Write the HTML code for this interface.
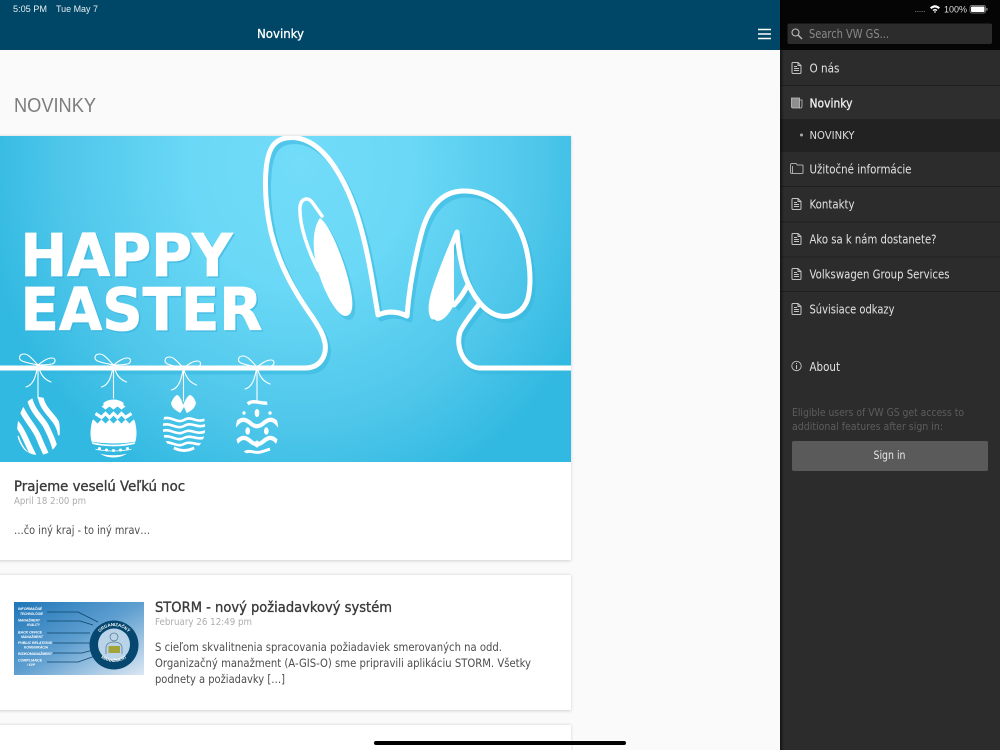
<!DOCTYPE html>
<html lang="sk"><head><meta charset="utf-8"><title>Novinky</title>
<style>
html,body{margin:0;padding:0;width:1000px;height:750px;overflow:hidden;background:#fafafa}
svg{display:block;position:absolute;left:0;top:0}
text{font-family:"DejaVu Sans","Liberation Sans",sans-serif}
.ls{font-family:"Liberation Sans",Arial,sans-serif}
.m{font-size:12.500px;fill:#e2e2e2}
.ic{fill:none;stroke:#c4c4c4;stroke-width:1;stroke-linejoin:round}
.t{font-size:14px;fill:#3a3a3a;stroke:#3a3a3a;stroke-width:.35}
.d{font-size:10px;fill:#adadad}
.b{font-size:11.500px;fill:#4d4d4d}
.lbl{font-family:"Liberation Sans",Arial,sans-serif;font-size:3.800px;font-weight:bold;font-style:italic;fill:#fff}
</style></head><body>
<svg width="1000" height="750" viewBox="0 0 1000 750" xmlns="http://www.w3.org/2000/svg">
<defs>
<radialGradient id="bg" gradientUnits="userSpaceOnUse" cx="0" cy="0" r="1" gradientTransform="translate(300 165) scale(320 350)">
<stop offset="0" stop-color="#72dcf9"/><stop offset=".35" stop-color="#6ad8f6"/><stop offset=".75" stop-color="#4ec6ea"/><stop offset="1" stop-color="#32b9e1"/></radialGradient>
<linearGradient id="th" x1="0" y1="0" x2="1" y2="1"><stop offset="0" stop-color="#1f76b8"/><stop offset=".5" stop-color="#5f9fd0"/><stop offset="1" stop-color="#dce7f3"/></linearGradient>
<linearGradient id="edge" x1="0" x2="1"><stop offset="0" stop-color="#000" stop-opacity=".55"/><stop offset="1" stop-color="#000" stop-opacity="0"/></linearGradient>
<filter id="soft" x="-5%" y="-5%" width="110%" height="110%"><feGaussianBlur stdDeviation=".35"/></filter>
<filter id="sh" x="-3%" y="-3%" width="106%" height="106%"><feGaussianBlur stdDeviation="1.600"/></filter>
<clipPath id="imgc"><rect x="0" y="136" width="571" height="326"/></clipPath>
<clipPath id="egg"><path d="M0-29C15-29 23-10 23 5C23 20 13 29 0 29C-13 29-23 20-23 5C-23-10-15-29 0-29Z"/></clipPath>
<path id="ear" d="M0 368H305C320 368 327 356 325 343C323 333 318 326 313 318C296 294 280 268 271 232C263 196 264 160 272 147C279 136 295 135 309 142C330 153 347 183 358 218C368 250 373 285 378 315C387 311 397 311 407 316C409 290 414 262 421 235C428 208 441 192 462 191C488 190 510 208 521 233C530 254 532 282 528 298C524 312 512 318 500 316C484 313 472 295 465 276C460 260 458 245 457 232C449 252 440 272 434 292C431 302 430 312 433 317M454 305C460 299 464 292 468 285M480 303C472 314 464 323 460 332C455 348 465 368 480 368H571"/>
<path id="inner" d="M318 270C308 250 299 225 300 207C301 198 308 197 312 202L322 216"/>
<path id="innerw" d="M320 218C314 226 313 240 314 250C315 262 317 270 320 277C324 290 336 315 345 316C352 316 353 308 352 298C350 282 343 258 333 237C329 229 325 222 320 218Z"/>
<path id="innerw2" d="M454 238C447 258 436 285 432 303C430 314 433 321 438 321C445 320 450 312 454 305Z"/>
<g id="bow" fill="none" stroke="#fff" stroke-width="1.100" stroke-linecap="round"><path d="M0 0C-5-5-9-11-14-11C-19-11-20-6-16-4C-11-2-5-1 0 0C4-3 9-7 14-7C18-7 18-2 14-1C9 0 4 0 0 0Z"/><path d="M0 0C-2 10-4 20-12 22M0 0C2 8 5 14 13 17M0 0V33"/></g>
<symbol id="doc" viewBox="0 0 11 12" overflow="visible"><path class="ic" d="M1 1.500Q1 .5 2 .5H7L10 3.500V10.500Q10 11.500 9 11.500H2Q1 11.500 1 10.500Z"/><path class="ic" d="M7 .8V3.500H9.800M3 4.500H6M3 6.500H8M3 8.500H8" stroke-width=".8"/></symbol>
</defs>

<rect width="780" height="750" fill="#fafafa"/>
<rect width="780" height="50" fill="#004767"/>
<text class="ls" x="13" y="12" font-size="9.500" fill="#e8eef2" textLength="34" lengthAdjust="spacingAndGlyphs">5:05 PM</text>
<text class="ls" x="56" y="12" font-size="9.500" fill="#e8eef2" textLength="42" lengthAdjust="spacingAndGlyphs">Tue May 7</text>
<text x="257" y="38" font-size="12.500" fill="#fff" stroke="#fff" stroke-width=".3" textLength="47" lengthAdjust="spacingAndGlyphs">Novinky</text>
<path d="M758 29.500H771M758 34H771M758 38.500H771" stroke="#fff" stroke-width="1.500"/>
<text class="ls" x="14" y="112" font-size="20.500" fill="#7d7d7d" textLength="82" lengthAdjust="spacingAndGlyphs">NOVINKY</text>

<g fill="#000" opacity=".16" filter="url(#sh)"><rect x="-5" y="136" width="576" height="425"/><rect x="-5" y="575" width="576" height="136"/><rect x="-5" y="725" width="576" height="40"/></g>
<rect x="0" y="136" width="571" height="424" fill="#fff"/>
<rect x="0" y="575" width="571" height="135" fill="#fff"/>
<rect x="0" y="725" width="571" height="40" fill="#fff"/>

<g clip-path="url(#imgc)">
<rect x="0" y="136" width="571" height="326" fill="url(#bg)"/>
<g filter="url(#soft)">
<g fill="none" stroke="#37b6de" stroke-width="5" opacity=".55" transform="translate(3 4)" stroke-linejoin="round"><use href="#ear"/></g>
<use href="#innerw" fill="#37b6de" opacity=".5" transform="translate(3 4)"/>
<g font-weight="bold" font-size="59" fill="#35aedb" stroke="#35aedb" stroke-width=".8" opacity=".55"><text x="22" y="277.500" textLength="212" lengthAdjust="spacingAndGlyphs">HAPPY</text><text x="22" y="331.500" textLength="242" lengthAdjust="spacingAndGlyphs">EASTER</text></g>
<g font-weight="bold" font-size="59" fill="#fff" stroke="#fff" stroke-width=".8"><text x="20.500" y="276" textLength="212" lengthAdjust="spacingAndGlyphs">HAPPY</text><text x="20.500" y="330" textLength="242" lengthAdjust="spacingAndGlyphs">EASTER</text></g>
<g fill="none" stroke="#fff" stroke-width="5" stroke-linejoin="round" stroke-linecap="round"><use href="#ear"/><use href="#inner" stroke-width="3.500"/></g>
<use href="#innerw" fill="#fff"/><use href="#innerw2" fill="#fff"/>
<use href="#bow" x="38" y="365"/><use href="#bow" x="113.500" y="365"/><use href="#bow" x="183.500" y="368"/><use href="#bow" x="257" y="367"/>

<g transform="translate(38.500 426) scale(.93 1)"><g clip-path="url(#egg)" fill="none" stroke="#fff" stroke-width="6">
<path d="M-24-3C-17 4-12 18-5 30"/><path d="M-19-18C-13-6-4 2 0 11C3 18 6 24 9 30"/><path d="M-10-29C-7-15 3-8 8 0C11 6 15 12 18 23"/><path d="M2-31C3-19 12-13 18-5C21-1 23 3 24 9"/><path d="M-22 10C-20 17-15 24-10 28" stroke-width="1.500"/></g></g>

<g transform="translate(113.500 428.500)"><g clip-path="url(#egg)" fill="none" stroke="#fff">
<path d="M-10-22Q0-29 10-22V-29H-10Z" fill="#fff" stroke="none"/><path d="M-12-22Q0-30 12-22L8-19L4-22L0-19L-4-22L-8-19Z" fill="#fff" stroke="none"/>
<path d="M-18-15L-12-11L-8-15L-4-11L0-15L4-11L8-15L12-11L18-15" stroke-width="3.200"/>
<path d="M-24-6L-20-9L-16-5L-12-9L-8-5L-4-9L0-5L4-9L8-5L12-9L16-5L20-9L24-6V13Q0 17-24 13Z" fill="#fff" stroke="none"/>
<path d="M-24 14Q0 20 24 14" stroke-width="1.800"/>
<path d="M-17 26Q0 31 17 26" stroke-width="3.500"/><path d="M-22 20Q0 25 22 20" stroke-width=".8"/>
</g><g fill="#fff"><circle cx="-14" cy="20" r="1.500"/><circle cx="-7" cy="21.500" r="1.500"/><circle cx="0" cy="22" r="1.500"/><circle cx="7" cy="21.500" r="1.500"/><circle cx="14" cy="20" r="1.500"/></g></g>

<g transform="translate(184 423) scale(.92 1)"><path d="M-4-10C-10-13-14-16-14-20C-12-25-9-28-7-28C-4-26-2-22-1-18C1-22 3-26 6-28C9-28 12-24 13-20C12-15 8-12 3-10L0-16Z" fill="#fff"/><g clip-path="url(#egg)" fill="none" stroke="#fff" stroke-width="2.600">
<path d="M-24-4C-14-8-8 1 0-3C8-8 14 1 24-4"/><path d="M-24 2C-14-1-8 7 0 3C8-2 14 6 24 2"/><path d="M-24 8C-14 5-8 13 0 9C8 5 14 13 24 8"/><path d="M-24 14C-14 11-8 19 0 15C8 11 14 18 24 14"/><path d="M-24 20C-14 17-8 25 0 21C8 17 14 24 24 20"/><path d="M-11 25Q0 30 11 25" stroke-width="3"/></g></g>

<g transform="translate(257 427) scale(.93 1)"><g clip-path="url(#egg)" fill="none" stroke="#fff" stroke-width="4.200">
<path d="M-10-23C-4-28 4-23 11-24" stroke-width="3.500"/>
<path d="M-24-1C-17-10-12-8-6-3C-2 0 2 0 6-3C12-8 17-10 24-1"/>
<path d="M-24 18C-17 8-12 10-6 15C-2 18 2 18 6 15C12 10 17 8 24 18"/>
<path d="M-14 26C-8 22-2 27 4 25C8 24 11 23 14 22" stroke-width="3"/></g>
<g fill="#fff"><ellipse cx="0" cy="-14" rx="2.500" ry="4"/><ellipse cx="-10" cy="4" rx="2.500" ry="3.800"/><ellipse cx="10" cy="4" rx="2.500" ry="3.800"/><ellipse cx="0" cy="17" rx="2.500" ry="3.500"/><circle cx="-14" cy="-14" r="1.800"/><circle cx="14" cy="-14" r="1.800"/></g></g>
</g>
</g>

<text class="t" x="14" y="491" textLength="171" lengthAdjust="spacingAndGlyphs">Prajeme veselú Veľkú noc</text>
<text class="d" x="14" y="504" textLength="72" lengthAdjust="spacingAndGlyphs">April 18 2:00 pm</text>
<text class="b" x="14" y="534" textLength="136" lengthAdjust="spacingAndGlyphs">…čo iný kraj - to iný mrav…</text>

<rect x="14" y="602" width="130" height="73" fill="url(#th)"/>
<g fill="none" stroke="#0d4468" stroke-width=".7"><path d="M47 612H78L98 622M47 621H80L93 625M47 633H90M53 643H90L92 642M53 653H82L93 650M47 662H78L98 655"/></g>
<g>
<text class="lbl" x="18" y="610" textLength="24" lengthAdjust="spacingAndGlyphs">INFORMAČNÉ</text><text class="lbl" x="20" y="615" textLength="23" lengthAdjust="spacingAndGlyphs">TECHNOLÓGIE</text>
<text class="lbl" x="18" y="621.500" textLength="22" lengthAdjust="spacingAndGlyphs">MANAŽMENT</text><text class="lbl" x="27" y="626" textLength="13" lengthAdjust="spacingAndGlyphs">KVALITY</text>
<text class="lbl" x="18" y="633.500" textLength="24" lengthAdjust="spacingAndGlyphs">BACK OFFICE</text><text class="lbl" x="21" y="638" textLength="22" lengthAdjust="spacingAndGlyphs">MANAŽMENT</text>
<text class="lbl" x="18" y="644" textLength="34" lengthAdjust="spacingAndGlyphs">PUBLIC RELATIONS</text><text class="lbl" x="24" y="648.500" textLength="24" lengthAdjust="spacingAndGlyphs">KOMUNIKÁCIA</text>
<text class="lbl" x="18" y="655" textLength="34" lengthAdjust="spacingAndGlyphs">RIZIKOMANAŽMENT</text>
<text class="lbl" x="18" y="661.500" textLength="24" lengthAdjust="spacingAndGlyphs">COMPLIANCE</text><text class="lbl" x="27" y="666" textLength="8" lengthAdjust="spacingAndGlyphs">/ KVP</text>
</g>
<circle cx="114" cy="645" r="24.500" fill="#05476f"/>
<circle cx="114" cy="644.500" r="16" fill="#b9d3e8"/>
<circle cx="114" cy="637" r="4" fill="none" stroke="#5f7f95" stroke-width=".8"/><path d="M106 654V647Q107 642 114 642Q121 642 122 647V654" fill="none" stroke="#5f7f95" stroke-width=".8"/>
<rect x="108.500" y="646" width="11.500" height="7" fill="#a3a33b"/>
<path id="arcT" d="M95 645A19 19 0 0 1 133 645" fill="none"/>
<path id="arcB" d="M93 645A21.500 21.500 0 0 0 135 645" fill="none"/>
<text class="ls" font-size="4.300" font-weight="bold" fill="#fff" text-anchor="middle"><textPath href="#arcT" startOffset="50%">ORGANIZAČNÝ</textPath></text>
<text class="ls" font-size="4.300" font-weight="bold" fill="#fff" text-anchor="middle"><textPath href="#arcB" startOffset="50%">MANAŽMENT</textPath></text>

<text class="t" x="155" y="612" textLength="237" lengthAdjust="spacingAndGlyphs">STORM - nový požiadavkový systém</text>
<text class="d" x="155" y="625" textLength="97" lengthAdjust="spacingAndGlyphs">February 26 12:49 pm</text>
<text class="b" x="155" y="651" textLength="347" lengthAdjust="spacingAndGlyphs">S cieľom skvalitnenia spracovania požiadaviek smerovaných na odd.</text>
<text class="b" x="155" y="667" textLength="376" lengthAdjust="spacingAndGlyphs">Organizačný manažment (A-GIS-O) sme pripravili aplikáciu STORM. Všetky</text>
<text class="b" x="155" y="683" textLength="130" lengthAdjust="spacingAndGlyphs">podnety a požiadavky […]</text>

<rect x="780" width="220" height="750" fill="#2c2c2c"/>
<rect x="780" width="220" height="50" fill="#050505"/>
<rect x="780" y="119" width="220" height="33" fill="#222"/>
<rect x="780" y="86" width="220" height="33" fill="#2e2e2e"/>
<g fill="#1f1f1f"><rect x="780" y="85" width="220" height="1"/><rect x="780" y="186" width="220" height="1"/><rect x="780" y="221.500" width="220" height="1"/><rect x="780" y="256.500" width="220" height="1"/><rect x="780" y="291" width="220" height="1"/></g>
<rect x="780" width="4" height="750" fill="url(#edge)"/>

<path d="M915 11.500h1.200m1 0h1.200m1 0h1.200m1 0h1.200m1 0h1.200" stroke="#666" stroke-width=".9" fill="none"/>
<path d="M930 7.500Q935 3 940 7.500L938.500 9Q935 6 931.500 9ZM932.500 10Q935 8 937.500 10L936.500 11Q935 10 933.500 11ZM934 12L935 11L936 12L935 13Z" fill="#fff"/>
<text class="ls" x="944" y="12.500" font-size="9.500" fill="#ddd" textLength="23" lengthAdjust="spacingAndGlyphs">100%</text>
<rect x="970" y="5.500" width="15.500" height="7.500" rx="1.800" fill="none" stroke="#999" stroke-width=".7"/><rect x="971" y="6.500" width="13.500" height="5.500" rx="1" fill="#fff"/><rect x="986.300" y="8" width="1.200" height="2.500" fill="#999"/>

<rect x="787.500" y="23.500" width="204.500" height="20.500" rx="2" fill="#2c2c2c"/>
<circle cx="795.500" cy="32.500" r="3.500" fill="none" stroke="#bbb" stroke-width="1.100"/><path d="M798 35L802 39" stroke="#bbb" stroke-width="1.300"/>
<text x="809" y="38" font-size="12" fill="#8a8a8a" textLength="80" lengthAdjust="spacingAndGlyphs">Search VW GS...</text>

<use href="#doc" x="791" y="62" width="11" height="12"/>
<text class="m" x="809.500" y="72.500" textLength="30" lengthAdjust="spacingAndGlyphs">O nás</text>
<path d="M791.500 98H799.500V108H793Q791.500 108 791.500 106.500Z" fill="#8f8f8f" stroke="#c4c4c4" stroke-width=".8"/><path d="M799.500 100H802V106.500Q802 108 800.500 108H799.500" fill="none" stroke="#c4c4c4" stroke-width=".8"/>
<text x="809.500" y="107.500" font-size="12.500" stroke="#f0f0f0" stroke-width=".3" textLength="43" lengthAdjust="spacingAndGlyphs" style="fill:#f0f0f0">Novinky</text>
<circle cx="801.500" cy="135" r="1.500" fill="#aaa"/>
<text x="809.500" y="139" font-size="10.500" fill="#ddd" textLength="45" lengthAdjust="spacingAndGlyphs">NOVINKY</text>
<path class="ic" d="M790.500 165Q790.500 163.500 792 163.500H796L797.500 165H802.500Q803 165 803 166V172.500Q803 173.500 802 173.500H792Q790.500 173.500 790.500 172Z" style="stroke:#aaa"/><path class="ic" d="M792.500 166V173" style="stroke:#aaa"/>
<text class="m" x="809.500" y="173.500" textLength="102" lengthAdjust="spacingAndGlyphs">Užitočné informácie</text>
<use href="#doc" x="791" y="198" width="11" height="12"/>
<text class="m" x="809.500" y="208.500" textLength="45" lengthAdjust="spacingAndGlyphs">Kontakty</text>
<use href="#doc" x="791" y="233" width="11" height="12"/>
<text class="m" x="809.500" y="243.500" textLength="127" lengthAdjust="spacingAndGlyphs">Ako sa k nám dostanete?</text>
<use href="#doc" x="791" y="268" width="11" height="12"/>
<text class="m" x="809.500" y="278.500" textLength="140" lengthAdjust="spacingAndGlyphs">Volkswagen Group Services</text>
<use href="#doc" x="791" y="303" width="11" height="12"/>
<text class="m" x="809.500" y="313.500" textLength="85" lengthAdjust="spacingAndGlyphs">Súvisiace odkazy</text>
<circle cx="796.500" cy="366" r="4.700" fill="none" stroke="#c4c4c4" stroke-width=".9"/><path d="M796.500 365V369M796.500 363V364" stroke="#c4c4c4" stroke-width="1"/>
<text class="m" x="809.500" y="371" textLength="30.500" lengthAdjust="spacingAndGlyphs">About</text>
<text x="792" y="416" font-size="10.500" fill="#5d5d5d" textLength="172" lengthAdjust="spacingAndGlyphs">Eligible users of VW GS get access to</text>
<text x="792" y="430" font-size="10.500" fill="#5d5d5d" textLength="151" lengthAdjust="spacingAndGlyphs">additional features after sign in:</text>
<rect x="792" y="441" width="196" height="30" rx="2" fill="#5a5a5a"/>
<text x="873.500" y="459" font-size="11.500" fill="#e6e6e6" textLength="32" lengthAdjust="spacingAndGlyphs">Sign in</text>

<rect x="374" y="741" width="252" height="4" rx="2" fill="#000"/>
</svg>
</body></html>
